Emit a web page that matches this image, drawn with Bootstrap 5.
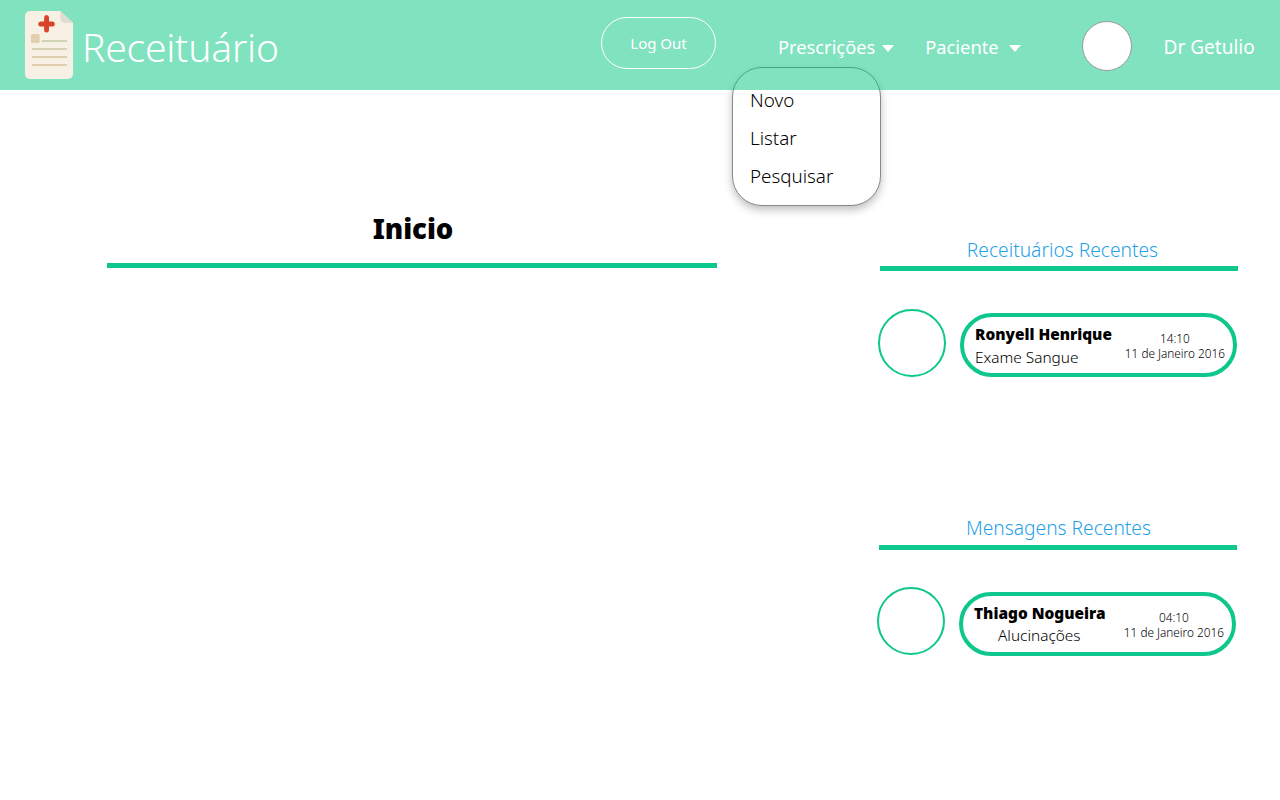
<!DOCTYPE html>
<html lang="pt">
<head>
<meta charset="utf-8">
<title>Receituário</title>
<link href="https://cdn.jsdelivr.net/npm/bootstrap@5.3.0/dist/css/bootstrap.min.css" rel="stylesheet">
<style>
body{font-family:"Noto Sans","Open Sans",sans-serif;background:#fff;color:#000;}
.topbar{height:90px;background:rgba(3,197,129,.5);color:#fff;padding-left:25px;}
.brand-logo{width:48px;height:68px;margin-top:11px;flex:none;}
.brand-name{font-size:39px;font-weight:300;line-height:1;margin:0 0 0 9px;padding-top:27px;width:519px;letter-spacing:-.2px;}
.logout{width:115px;height:52px;margin-top:17px;border:1px solid #fff;border-radius:26px;color:#fff;font-size:15px;font-weight:400;padding:0;background:transparent;}
.logout:hover{color:#fff;border-color:#fff;}
.menu-zone{margin-left:62px;padding-top:34px;gap:0;}
.menu-item{color:#fff;font-size:18.3px;line-height:26px;text-decoration:none;display:flex;align-items:center;}
.menu-item:hover{color:#fff;}
.caret-down{width:0;height:0;border-left:6.5px solid transparent;border-right:6.5px solid transparent;border-top:7px solid #fff;margin-top:3px;margin-left:7px;}
.caret-far{margin-left:10px;}
.item-wrap{position:relative;}
.item-next{margin-left:31px;}
.menu-panel{position:absolute;left:-46px;top:33px;width:149px;height:139px;background:#fff;border:1px solid #888;border-radius:30px;box-shadow:0 4px 8px rgba(0,0,0,.25);z-index:-1;padding:13px 0 0 17px;}
.menu-panel a{display:block;color:#000;text-decoration:none;font-size:18.8px;line-height:38px;font-weight:300;}
.top-avatar{width:50px;height:50px;margin-top:21px;margin-left:61px;background:#fff;border:1px solid #999;border-radius:50%;flex:none;}
.doc-name{font-size:19px;line-height:26px;padding-top:34px;margin-left:32px;white-space:nowrap;}
.main-col{width:610px;margin-left:107px;padding-top:120px;}
.page-title{font-size:27.5px;line-height:38px;font-weight:900;text-align:center;margin:0;padding-left:2px;}
.rule{height:5px;background:#0ec78c;}
.main-col .rule{margin-top:15px;}
.side-col{width:358px;margin-left:163px;padding-top:147px;}
.side-title{font-size:19.2px;line-height:26px;font-weight:300;color:#1f9fe8;text-align:center;margin:0 0 3px;}
.side-first .side-title{padding-left:7px;}
.side-second{width:358px;margin-top:138px;margin-left:-1px;}
.side-second .side-title{font-size:19.2px;padding-left:1px;margin-bottom:4px;}
.msg-row{margin-top:38px;margin-left:-2px;}
.side-second .msg-row{margin-top:37px;}
.msg-avatar{width:68px;height:68px;border:2px solid #0ec78c;border-radius:50%;flex:none;}
.msg-pill{width:277px;height:64px;margin-left:14px;margin-top:4px;border:4px solid #0ec78c;border-radius:32px;padding:7px 8px 0 11px;flex:none;}
.side-second .msg-pill{margin-top:5px;}
.msg-from{font-size:15.4px;line-height:21px;font-weight:900;white-space:nowrap;}
.msg-what{font-size:15.4px;line-height:26px;font-weight:300;white-space:nowrap;}
.msg-center{padding-left:24px;line-height:23px;}
.msg-when{font-size:11.8px;line-height:15px;font-weight:300;text-align:center;white-space:nowrap;padding-top:7px;}
</style>
</head>
<body>
<header class="topbar d-flex">
  <svg class="brand-logo" viewBox="0 0 49 68" preserveAspectRatio="none" aria-hidden="true">
    <path d="M5 0H36L49 12V63a5 5 0 0 1-5 5H5a5 5 0 0 1-5-5V5a5 5 0 0 1 5-5z" fill="#f7f0e5"/>
    <path d="M36 0L49 12H41a5 5 0 0 1-5-5z" fill="#e0dcd2"/>
    <path d="M19.500 6.500a2 2 0 0 1 5 0V10.500H28a2.500 2.500 0 0 1 0 5H24.500V19a2.500 2.500 0 0 1-5 0V15.500H16a2.500 2.500 0 0 1 0-5H19.500z" fill="#d9432a"/>
    <rect x="6" y="23" width="9" height="9" rx="1.500" fill="#e3cfb0"/>
    <rect x="17" y="29" width="26" height="2" fill="#cfd4b4"/>
    <rect x="7" y="37" width="36" height="2" fill="#d5d3b3"/>
    <rect x="7" y="45" width="36" height="2" fill="#ddcfae"/>
    <rect x="7" y="53" width="36" height="2" fill="#e0cfae"/>
  </svg>
  <h1 class="brand-name">Receituário</h1>
  <button type="button" class="btn logout">Log Out</button>
  <nav class="menu-zone d-flex">
    <div class="item-wrap">
      <a class="menu-item" href="#">Prescrições<span class="caret-down"></span></a>
      <div class="menu-panel">
        <a href="#">Novo</a>
        <a href="#">Listar</a>
        <a href="#">Pesquisar</a>
      </div>
    </div>
    <div class="item-wrap item-next">
      <a class="menu-item" href="#">Paciente<span class="caret-down caret-far"></span></a>
    </div>
  </nav>
  <div class="top-avatar"></div>
  <div class="doc-name">Dr Getulio</div>
</header>
<main class="d-flex">
  <section class="main-col">
    <h2 class="page-title">Inicio</h2>
    <div class="rule"></div>
  </section>
  <aside class="side-col">
    <div class="side-first">
      <h3 class="side-title">Receituários Recentes</h3>
      <div class="rule"></div>
      <div class="msg-row d-flex">
        <div class="msg-avatar"></div>
        <div class="msg-pill d-flex justify-content-between">
          <div><div class="msg-from">Ronyell Henrique</div><div class="msg-what">Exame Sangue</div></div>
          <div class="msg-when">14:10<br>11 de Janeiro 2016</div>
        </div>
      </div>
    </div>
    <div class="side-second">
      <h3 class="side-title">Mensagens Recentes</h3>
      <div class="rule"></div>
      <div class="msg-row d-flex">
        <div class="msg-avatar"></div>
        <div class="msg-pill d-flex justify-content-between">
          <div><div class="msg-from">Thiago Nogueira</div><div class="msg-what msg-center">Alucinações</div></div>
          <div class="msg-when">04:10<br>11 de Janeiro 2016</div>
        </div>
      </div>
    </div>
  </aside>
</main>
<script src="https://cdn.jsdelivr.net/npm/bootstrap@5.3.0/dist/js/bootstrap.bundle.min.js"></script>
</body>
</html>
